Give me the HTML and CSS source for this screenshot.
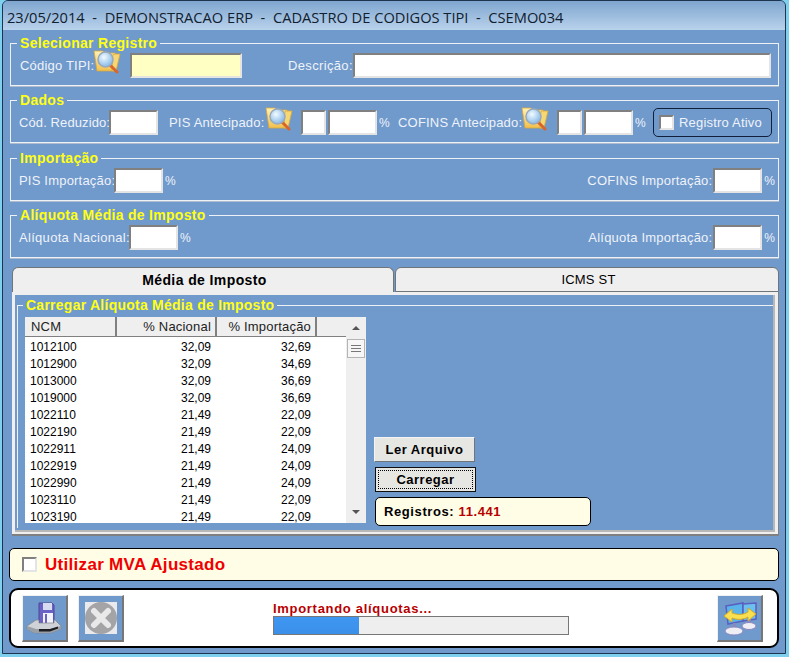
FILE: index.html
```html
<!DOCTYPE html>
<html lang="pt">
<head>
    <meta charset="UTF-8">
    <title>CSEMO034</title>
    <link rel="stylesheet" href="styles.css">
</head>
<body>
    <svg class="defs" width="0" height="0">
        <defs>
            <linearGradient id="folderFill" x1="0" y1="0" x2="0" y2="1">
                <stop offset="0" stop-color="#fff2b8"/>
                <stop offset="1" stop-color="#f0c050"/>
            </linearGradient>
            <radialGradient id="lensFill" cx="0.4" cy="0.35" r="0.7">
                <stop offset="0" stop-color="#f2fbff"/>
                <stop offset="1" stop-color="#7fb4e6"/>
            </radialGradient>
            <symbol id="folder-search" viewBox="0 0 28 26">
                <path d="M1 3h9l2 2h10l1 3-2 15H4z" fill="url(#folderFill)" stroke="#d8a838" stroke-width="0.8"/>
                <path d="M20 6h7l-4 17h-4z" fill="#f7d774" stroke="#d8a838" stroke-width="0.8"/>
                <path d="M17 17l7 7" stroke="#d8662a" stroke-width="3" stroke-linecap="round"/>
                <circle cx="12.5" cy="11.5" r="7.5" fill="url(#lensFill)" stroke="#9aa9b8" stroke-width="1.5"/>
            </symbol>
        </defs>
    </svg>

    <div class="window">
        <div class="title">23/05/2014&nbsp; - &nbsp;DEMONSTRACAO ERP&nbsp; - &nbsp;CADASTRO DE CODIGOS TIPI&nbsp; - &nbsp;CSEMO034</div>

        <div class="client">
            <fieldset class="group">
                <legend>Selecionar Registro</legend>
                <div class="row">
                    <label class="lbl-tipi">Código TIPI:</label>
                    <svg class="folder"><use href="#folder-search"/></svg>
                    <input class="field yellow w-tipi" type="text">
                    <label class="lbl-desc">Descrição:</label>
                    <input class="field w-desc" type="text">
                </div>
            </fieldset>

            <fieldset class="group">
                <legend>Dados</legend>
                <div class="row">
                    <label class="lbl-red">Cód. Reduzido:</label>
                    <input class="field w-49" type="text">
                    <label class="lbl-pis">PIS Antecipado:</label>
                    <svg class="folder"><use href="#folder-search"/></svg>
                    <input class="field w-25 after-folder" type="text">
                    <input class="field w-49 next" type="text">
                    <span class="pct wide">%</span>
                    <label class="lbl-cofins">COFINS Antecipado:</label>
                    <svg class="folder"><use href="#folder-search"/></svg>
                    <input class="field w-25 after-folder" type="text">
                    <input class="field w-49 next" type="text">
                    <span class="pct wide">%</span>
                    <div class="active-box">
                        <span class="check"></span>
                        <span>Registro Ativo</span>
                    </div>
                </div>
            </fieldset>

            <fieldset class="group import">
                <legend>Importação</legend>
                <div class="row spread">
                    <div class="pair">
                        <label class="lbl-pis-imp">PIS Importação:</label>
                        <input class="field w-49" type="text">
                        <span class="pct">%</span>
                    </div>
                    <div class="pair">
                        <label class="lbl-right">COFINS Importação:</label>
                        <input class="field w-49" type="text">
                        <span class="pct">%</span>
                    </div>
                </div>
            </fieldset>

            <fieldset class="group">
                <legend>Alíquota Média de Imposto</legend>
                <div class="row spread">
                    <div class="pair">
                        <label class="lbl-nac">Alíquota Nacional:</label>
                        <input class="field w-49" type="text">
                        <span class="pct">%</span>
                    </div>
                    <div class="pair">
                        <label class="lbl-right">Alíquota Importação:</label>
                        <input class="field w-49" type="text">
                        <span class="pct">%</span>
                    </div>
                </div>
            </fieldset>

            <div class="tabs">
                <div class="tab active">Média de Imposto</div>
                <div class="tab">ICMS ST</div>
            </div>
            <div class="tab-panel">
                <div class="panel-inner">
                    <fieldset class="group load">
                        <legend>Carregar Alíquota Média de Imposto</legend>
                        <div class="load-body">
                            <div class="grid">
                                <div class="grid-main">
                                    <div class="grid-head">
                                        <span class="col-ncm">NCM</span>
                                        <span class="col-num">% Nacional</span>
                                        <span class="col-num">% Importação</span>
                                        <span class="col-rest"></span>
                                    </div>
                                    <table>
                                        <tr><td>1012100</td><td>32,09</td><td>32,69</td></tr>
                                        <tr><td>1012900</td><td>32,09</td><td>34,69</td></tr>
                                        <tr><td>1013000</td><td>32,09</td><td>36,69</td></tr>
                                        <tr><td>1019000</td><td>32,09</td><td>36,69</td></tr>
                                        <tr><td>1022110</td><td>21,49</td><td>22,09</td></tr>
                                        <tr><td>1022190</td><td>21,49</td><td>22,09</td></tr>
                                        <tr><td>1022911</td><td>21,49</td><td>24,09</td></tr>
                                        <tr><td>1022919</td><td>21,49</td><td>24,09</td></tr>
                                        <tr><td>1022990</td><td>21,49</td><td>24,09</td></tr>
                                        <tr><td>1023110</td><td>21,49</td><td>22,09</td></tr>
                                        <tr><td>1023190</td><td>21,49</td><td>22,09</td></tr>
                                    </table>
                                </div>
                                <div class="scrollbar">
                                    <span class="arrow up"></span>
                                    <span class="thumb"><i></i><i></i><i></i></span>
                                    <span class="arrow down"></span>
                                </div>
                            </div>
                            <div class="actions">
                                <button class="btn">Ler Arquivo</button>
                                <button class="btn focused"><span>Carregar</span></button>
                                <div class="count">Registros: <b>11.441</b></div>
                            </div>
                        </div>
                    </fieldset>
                </div>
            </div>

            <div class="mva">
                <span class="check"></span>
                <span>Utilizar MVA Ajustado</span>
            </div>

            <div class="footer">
                <button class="icon-btn">
                    <svg width="38" height="38" viewBox="0 0 38 38">
                        <path d="M13 4h13l2 2v20H13z" fill="#6a62c4" stroke="#4a4698"/>
                        <rect x="17" y="4" width="9" height="7" fill="#d8dcf0"/>
                        <rect x="17" y="14" width="10" height="10" fill="#f2f2fa"/>
                        <rect x="19" y="15" width="2" height="9" fill="#6a62c4"/>
                        <path d="M1 27l9-6h3v3h15v-3h1l6 6v3l-11 4H9l-8-4z" fill="#cfd2d6" stroke="#7f848a" stroke-width="0.7"/>
                        <path d="M1 27l9 3h14l11-3v3l-11 4H9l-8-4z" fill="#9a9fa5"/>
                        <path d="M13 30h11l8-2.500v2l-8 3H13z" fill="#1c1e22"/>
                    </svg>
                </button>
                <button class="icon-btn second">
                    <svg width="38" height="38" viewBox="0 0 38 38">
                        <rect x="3" y="3" width="32" height="32" fill="#eaeaec"/>
                        <circle cx="19" cy="19" r="16" fill="#a4a4a6"/>
                        <path d="M12 12l14 14M26 12L12 26" stroke="#e9e9e9" stroke-width="6" stroke-linecap="round"/>
                    </svg>
                </button>
                <div class="status">
                    <div class="status-text">Importando alíquotas...</div>
                    <div class="progress"><div class="progress-fill" style="width: 29%"></div></div>
                </div>
                <button class="icon-btn">
                    <svg width="38" height="38" viewBox="0 0 38 38">
                        <path d="M5 7l17-3v18l-15 3z" fill="#58b4ea" stroke="#5a5fc0" stroke-width="1.5"/>
                        <path d="M22 5l13-1v16l-13 2z" fill="#6cc0ee" stroke="#5a5fc0" stroke-width="1.5"/>
                        <rect x="12" y="24" width="3" height="7" fill="#8a88c0"/>
                        <rect x="27" y="20" width="3" height="6" fill="#8a88c0"/>
                        <ellipse cx="13" cy="32" rx="9" ry="4" fill="#eeeef4" stroke="#8a88c0"/>
                        <ellipse cx="28" cy="27" rx="7" ry="3.500" fill="#eeeef4" stroke="#8a88c0"/>
                        <path d="M3 17l8-7v4c6 2 11 2 16-1V9l8 6-8 7v-4c-5 3-11 3-16 1v4z" fill="#f8e050" stroke="#d2a92a"/>
                    </svg>
                </button>
            </div>
        </div>
    </div>
</body>
</html>
```

FILE: styles.css
```css
* {
    box-sizing: border-box;
}
html, body {
    margin: 0;
    padding: 0;
    height: 657px;
    overflow: hidden;
}
body {
    background-color: #7fd0ee;
    font-family: "Liberation Sans", Arial, sans-serif;
    font-size: 13px;
    letter-spacing: 0.2px;
    color: #eef3f9;
}
.defs {
    display: block;
    height: 0;
}
.window {
    width: 784px;
    height: 654px;
    margin-left: 2px;
    background-color: #7099cc;
    border: 1px solid #1e3550;
    border-radius: 6px 6px 0 0;
    overflow: hidden;
}
.title {
    height: 29px;
    padding: 6px 0 0 4px;
    font-family: "Open Sans", sans-serif;
    font-size: 14.65px;
    letter-spacing: 0;
    line-height: 20px;
    color: #10202e;
    white-space: nowrap;
    background: linear-gradient(#7fa6cf, #b9d2ec);
}
.client {
    padding: 0 6px 0 7px;
}

/* Groups */
.group {
    margin: 6px 0 0;
    padding: 0 3px 0 8px;
    height: 50px;
    border: 1px solid #eef2f7;
    box-shadow: 0 1px 0 #aebccd;
    min-width: 0;
}
.group + .group {
    margin-top: 7px;
}
.group.import {
    margin-top: 8px;
}
legend {
    margin-left: -2px;
    padding: 0 3px;
    font-size: 14px;
    line-height: 14px;
    font-weight: bold;
    letter-spacing: 0.3px;
    color: #ffff14;
}
.row {
    display: flex;
    align-items: center;
    height: 25px;
    margin-top: 3px;
}
.spread {
    justify-content: space-between;
}
.pair {
    display: flex;
    align-items: center;
}
label {
    white-space: nowrap;
    flex: none;
}
.field {
    height: 25px;
    padding: 0;
    background: #fff;
    border: 2px solid;
    border-color: #808080 #e4e4e4 #e4e4e4 #808080;
    outline: none;
    flex: none;
}
.yellow {
    background: #ffffc4;
}
.w-tipi { width: 112px; margin-left: 9px; }
.w-desc { width: 418px; }
.w-49 { width: 49px; }
.w-25 { width: 25px; }
.after-folder { margin-left: 8px; }
.next { margin-left: 2px; }
.folder {
    width: 28px;
    height: 26px;
    margin-top: -10px;
    flex: none;
}
.lbl-tipi { width: 73px; margin-left: 1px; }
.lbl-desc { width: 65px; margin-left: 46px; letter-spacing: 0.35px; }
.lbl-red { width: 90px; letter-spacing: 0.1px; }
.lbl-pis { width: 96px; margin-left: 11px; }
.lbl-cofins { width: 123px; margin-left: 1px; }
.lbl-pis-imp { width: 95px; }
.lbl-nac { width: 110px; letter-spacing: 0.3px; }
.lbl-right { margin-right: 1px; }
.pct {
    margin-left: 2px;
    font-size: 12px;
    letter-spacing: 0;
}
.pct.wide { width: 18px; }
.active-box {
    display: flex;
    align-items: center;
    width: 119px;
    height: 29px;
    padding-left: 5px;
    gap: 5px;
    border: 1px solid #10203a;
    border-radius: 5px;
    white-space: nowrap;
    flex: none;
}
.check {
    display: block;
    width: 15px;
    height: 15px;
    background: #fff;
    border: 2px solid;
    border-color: #808080 #e4e4e4 #e4e4e4 #808080;
    flex: none;
}

/* Tabs */
.tabs {
    display: flex;
    margin: 9px 0 0 2px;
    height: 25px;
}
.tab {
    width: 384px;
    margin-left: 1px;
    padding-left: 3px;
    font-size: 13px;
    line-height: 24px;
    text-align: center;
    color: #000;
    background: #efefef;
    border: 1px solid #70757a;
    border-radius: 6px 6px 0 0;
}
.tab.active {
    width: 382px;
    margin-left: 0;
    font-size: 14px;
    font-weight: bold;
    letter-spacing: 0.4px;
    border-bottom: 0;
}
.tab-panel {
    width: 767px;
    height: 244px;
    margin-left: 2px;
    padding: 3px;
    background: #efefef;
    border: solid #808080;
    border-width: 0 1px 2px 0;
}
.panel-inner {
    height: 237px;
    background: #7099cc;
    padding: 3px 0 0 2px;
    border-right: 2px solid #b8b8b8;
    border-bottom: 2px solid #b8b8b8;
}
.load {
    margin: 0;
    width: 756px;
    height: 230px;
    padding: 0 0 0 7px;
    border-right: 0;
    border-bottom: 0;
    box-shadow: none;
}
.load legend {
    letter-spacing: 0.25px;
}
.load-body {
    display: flex;
    align-items: flex-end;
    height: 206px;
    margin-top: 5px;
}

/* Grid */
.grid {
    display: flex;
    width: 341px;
    height: 206px;
    background: #fff;
    color: #000;
    font-size: 12px;
    letter-spacing: 0;
    overflow: hidden;
}
.grid-main {
    width: 321px;
}
.grid-head {
    display: flex;
    height: 20px;
    background: #efefef;
    border-bottom: 1px solid #808080;
    font-size: 13px;
    letter-spacing: 0.2px;
    line-height: 19px;
    color: #222;
}
.grid-head span {
    border-right: 2px solid #808080;
    margin-right: 1px;
    white-space: nowrap;
}
.col-ncm { width: 92px; padding-left: 6px; }
.col-num { width: 99px; padding-right: 4px; text-align: right; }
.col-rest { flex: 1; border-right: 0 !important; }
table {
    margin-top: 2px;
    border-collapse: collapse;
    table-layout: fixed;
}
td {
    height: 17px;
    padding: 0;
    line-height: 17px;
    text-align: right;
}
td:nth-child(1) { width: 52px; padding-left: 5px; text-align: left; }
td:nth-child(2) { width: 134px; }
td:nth-child(3) { width: 100px; }
.scrollbar {
    display: flex;
    flex-direction: column;
    align-items: center;
    width: 20px;
    background: #efefef;
}
.arrow {
    width: 0;
    height: 0;
    border-left: 4px solid transparent;
    border-right: 4px solid transparent;
}
.arrow.up {
    margin-top: 9px;
    border-bottom: 4px solid #555;
}
.arrow.down {
    margin-top: auto;
    margin-bottom: 9px;
    border-top: 4px solid #555;
}
.thumb {
    display: flex;
    flex-direction: column;
    justify-content: center;
    gap: 2px;
    width: 18px;
    height: 19px;
    margin-top: 9px;
    padding: 0 3px;
    background: #f6f6f6;
    border: 1px solid #b4b4b4;
}
.thumb i {
    display: block;
    height: 1px;
    background: #777;
}

/* Buttons beside the grid */
.actions {
    display: flex;
    flex-direction: column;
    margin-left: 8px;
    margin-bottom: -3px;
}
.btn {
    width: 101px;
    height: 25px;
    padding: 0;
    font-family: "Liberation Sans", Arial, sans-serif;
    font-size: 13px;
    font-weight: bold;
    letter-spacing: 0.5px;
    color: #000;
    background: #e6e6e2;
    border: 1px solid;
    border-color: #f4f4f4 #70757a #70757a #f4f4f4;
}
.btn.focused {
    margin: 5px 0 0 1px;
    border: 1px solid #101010;
    padding: 2px;
}
.btn.focused span {
    display: block;
    height: 100%;
    line-height: 17px;
    border: 1px dotted #000;
}
.count {
    width: 216px;
    height: 29px;
    margin: 5px 0 0 1px;
    padding-left: 8px;
    font-weight: bold;
    letter-spacing: 0.6px;
    line-height: 27px;
    color: #000;
    background: #fffde6;
    border: 1px solid #000;
    border-radius: 5px;
}
.count b {
    color: #b80000;
}

/* Bottom */
.mva {
    display: flex;
    align-items: center;
    gap: 8px;
    width: 770px;
    height: 33px;
    margin: 12px 0 0 -1px;
    padding-left: 12px;
    font-size: 17px;
    font-weight: bold;
    letter-spacing: 0.3px;
    color: #f00000;
    background: #fffde6;
    border: 1px solid #000;
    border-radius: 5px;
}
.footer {
    display: flex;
    align-items: center;
    width: 770px;
    height: 60px;
    margin: 7px 0 0 -1px;
    padding: 0 14px 0 11px;
    background: #fff;
    border: 2px solid #000;
    border-radius: 9px;
}
.icon-btn {
    display: flex;
    align-items: center;
    justify-content: center;
    width: 46px;
    height: 47px;
    padding: 0;
    background: #7099cc;
    border: 1px solid;
    border-color: #f0f0f0 #777 #777 #f0f0f0;
    border-width: 1px 2px 2px 1px;
    flex: none;
}
.icon-btn.second {
    margin-left: 10px;
}
.status {
    width: 296px;
    margin: 0 auto 0 149px;
}
.status-text {
    font-size: 13px;
    font-weight: bold;
    letter-spacing: 0.7px;
    line-height: 15px;
    color: #b80000;
}
.progress {
    height: 19px;
    background: #eeeeee;
    border: 1px solid #777;
}
.progress-fill {
    height: 100%;
    background: linear-gradient(#3f97f2, #3a8fe8);
}
```
